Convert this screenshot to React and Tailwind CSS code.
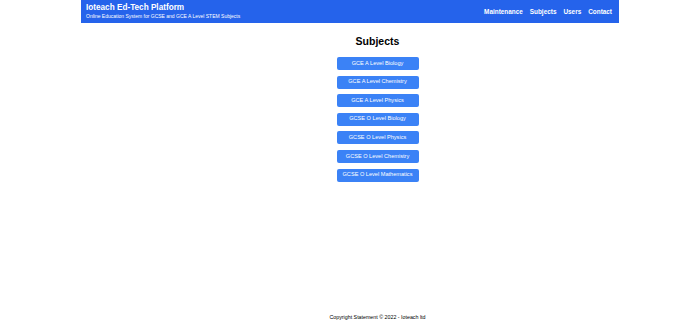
import React from "react";

const subjects = [
  "GCE A Level Biology",
  "GCE A Level Chemistry",
  "GCE A Level Physics",
  "GCSE O Level Biology",
  "GCSE O Level Physics",
  "GCSE O Level Chemistry",
  "GCSE O Level Mathematics",
];

export default function App() {
  return (
    <div
      className="min-h-[323px] bg-white flex flex-col"
      style={{ fontFamily: '"Liberation Sans", Arial, sans-serif' }}
    >
      <header className="w-[538px] h-[23px] mx-auto bg-[#2563eb] text-white flex items-center justify-between pl-[5px] pr-[7px]">
        <div className="flex flex-col leading-none">
          <span className="text-[8.2px] font-bold">Ioteach Ed-Tech Platform</span>
          <span className="text-[5px] mt-[2px]">
            Online Education System for GCSE and GCE A Level STEM Subjects
          </span>
        </div>
        <nav className="flex gap-[7px] text-[6.4px] font-bold">
          <a>Maintenance</a>
          <a>Subjects</a>
          <a>Users</a>
          <a>Contact</a>
        </nav>
      </header>

      <main className="flex-1 pl-[55px] flex flex-col items-center pt-[12.5px]">
        <h1 className="text-[10.5px] font-bold text-black leading-none mb-[11px]">Subjects</h1>
        <div className="flex flex-col gap-[5.6px]">
          {subjects.map((s) => (
            <button
              key={s}
              className="w-[82px] h-[13px] rounded-[2px] bg-[#3b82f6] text-white text-[5.6px] leading-none"
            >
              {s}
            </button>
          ))}
        </div>
      </main>

      <footer className="pl-[55px] text-center text-[5.3px] text-black pb-[1px]">
        Copyright Statement © 2022 - Ioteach ltd
      </footer>
    </div>
  );
}
